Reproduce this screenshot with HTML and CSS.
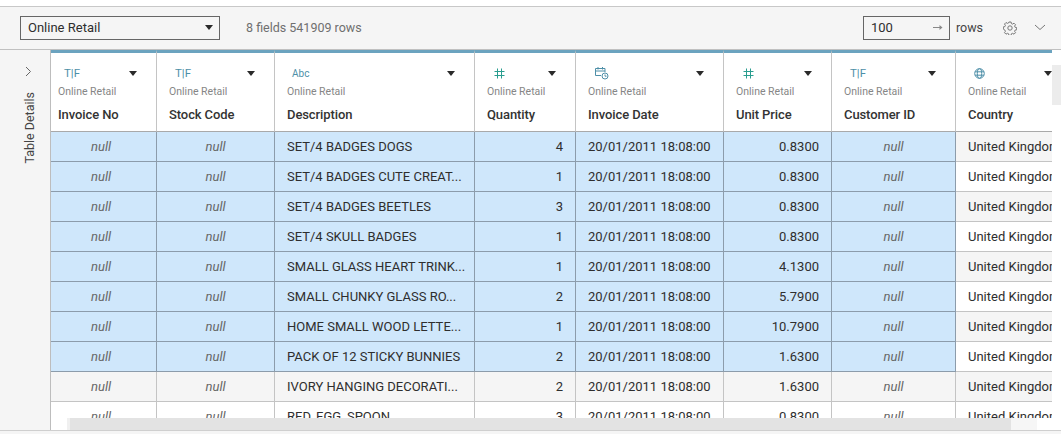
FILE: index.html
```html
<!DOCTYPE html>
<html lang="en">
<head>
<meta charset="utf-8">
<title>Online Retail</title>
<link rel="stylesheet" href="styles.css">
</head>
<body>
<div class="topgap"></div>
<header class="toolbar">
  <div class="source">Online Retail<span class="caret"></span></div>
  <div class="summary">8 fields 541909 rows</div>
  <div class="rowbox"><span>100</span><svg class="arrow" width="10" height="7" viewBox="0 0 10 7"><path d="M0 3.500H9" fill="none" stroke="#888" stroke-width="1"/><path d="M6.500 1L9.500 3.500L6.500 6Z" fill="#888"/></svg></div>
  <div class="rowslabel">rows</div>
  <svg class="gear" width="14" height="14" viewBox="0 0 14 14"><path d="M5.900 1h2.200l.3 1.600 1.200.5 1.400-.9 1.500 1.500-.9 1.400.5 1.200 1.600.3v2.200l-1.600.3-.5 1.200.9 1.400-1.500 1.500-1.400-.9-1.200.5-.3 1.600H5.900l-.3-1.600-1.200-.5-1.400.9-1.500-1.500.9-1.400-.5-1.200L.3 8.100V5.900l1.600-.3.5-1.200-.9-1.400L3 1.500l1.400.9 1.200-.5z" fill="none" stroke="#777"/><circle cx="7" cy="7" r="2.200" fill="none" stroke="#777"/></svg>
  <svg class="chev" width="12" height="7" viewBox="0 0 12 7"><path d="M1 1l5 4.500 5-4.500" fill="none" stroke="#777"/></svg>
</header>
<main class="main">
  <aside class="side">
    <svg class="sidechev" width="7" height="11" viewBox="0 0 7 11"><path d="M1 1l4.500 4.500L1 10" fill="none" stroke="#666"/></svg>
    <div class="sidetitle">Table Details</div>
  </aside>
  <div class="gridwrap">
    <table class="grid">
      <colgroup><col class="c1"><col class="c2"><col class="c3"><col class="c4"><col class="c5"><col class="c6"><col class="c7"><col class="c8"></colgroup>
      <thead>
        <tr>
          <th class="first"><div class="top"><span class="ty ty-text">T|F</span><span class="caret"></span></div><div class="src">Online Retail</div><div class="name">Invoice No</div></th>
          <th><div class="top"><span class="ty ty-text">T|F</span><span class="caret"></span></div><div class="src">Online Retail</div><div class="name">Stock Code</div></th>
          <th><div class="top"><span class="ty ty-abc">Abc</span><span class="caret"></span></div><div class="src">Online Retail</div><div class="name">Description</div></th>
          <th><div class="top"><svg class="ty ty-num" width="11" height="11" viewBox="0 0 11 11"><path d="M3.500 .5V10.500M7.500 .5V10.500M.5 3.500H10.500M.5 7.500H10.500" fill="none" stroke="#2a9d8f"/></svg><span class="caret"></span></div><div class="src">Online Retail</div><div class="name">Quantity</div></th>
          <th><div class="top"><svg class="ty ty-date" width="15" height="14" viewBox="0 0 15 14"><path d="M7 9.500H1.500V2.500H11V6M1.500 5H11M4 1V3.500M8.500 1V3.500" fill="none" stroke="#4e8fa8"/><circle cx="11" cy="10" r="3" fill="none" stroke="#4e8fa8"/><path d="M11 8.500V10.200H12.500" fill="none" stroke="#4e8fa8"/></svg><span class="caret"></span></div><div class="src">Online Retail</div><div class="name">Invoice Date</div></th>
          <th><div class="top"><svg class="ty ty-num" width="11" height="11" viewBox="0 0 11 11"><path d="M3.500 .5V10.500M7.500 .5V10.500M.5 3.500H10.500M.5 7.500H10.500" fill="none" stroke="#2a9d8f"/></svg><span class="caret"></span></div><div class="src">Online Retail</div><div class="name">Unit Price</div></th>
          <th><div class="top"><span class="ty ty-text">T|F</span><span class="caret"></span></div><div class="src">Online Retail</div><div class="name">Customer ID</div></th>
          <th><div class="top"><svg class="ty ty-geo" width="11" height="11" viewBox="0 0 11 11"><circle cx="5.500" cy="5.500" r="4.800" fill="none" stroke="#4e8fa8"/><ellipse cx="5.500" cy="5.500" rx="2.200" ry="4.800" fill="none" stroke="#4e8fa8"/><path d="M1 3.800H10M1 7.200H10" fill="none" stroke="#4e8fa8"/></svg><span class="caret caret-last"></span></div><div class="src">Online Retail</div><div class="name">Country</div></th>
        </tr>
      </thead>
      <tbody>
        <tr class="sel"><td class="null first">null</td><td class="null">null</td><td>SET/4 BADGES DOGS</td><td class="num">4</td><td>20/01/2011 18:08:00</td><td class="num">0.8300</td><td class="null">null</td><td class="country">United Kingdom</td></tr>
        <tr class="sel"><td class="null first">null</td><td class="null">null</td><td>SET/4 BADGES CUTE CREAT...</td><td class="num">1</td><td>20/01/2011 18:08:00</td><td class="num">0.8300</td><td class="null">null</td><td class="country">United Kingdom</td></tr>
        <tr class="sel"><td class="null first">null</td><td class="null">null</td><td>SET/4 BADGES BEETLES</td><td class="num">3</td><td>20/01/2011 18:08:00</td><td class="num">0.8300</td><td class="null">null</td><td class="country">United Kingdom</td></tr>
        <tr class="sel"><td class="null first">null</td><td class="null">null</td><td>SET/4 SKULL BADGES</td><td class="num">1</td><td>20/01/2011 18:08:00</td><td class="num">0.8300</td><td class="null">null</td><td class="country">United Kingdom</td></tr>
        <tr class="sel"><td class="null first">null</td><td class="null">null</td><td>SMALL GLASS HEART TRINK...</td><td class="num">1</td><td>20/01/2011 18:08:00</td><td class="num">4.1300</td><td class="null">null</td><td class="country">United Kingdom</td></tr>
        <tr class="sel"><td class="null first">null</td><td class="null">null</td><td>SMALL CHUNKY GLASS RO...</td><td class="num">2</td><td>20/01/2011 18:08:00</td><td class="num">5.7900</td><td class="null">null</td><td class="country">United Kingdom</td></tr>
        <tr class="sel"><td class="null first">null</td><td class="null">null</td><td>HOME SMALL WOOD LETTE...</td><td class="num">1</td><td>20/01/2011 18:08:00</td><td class="num">10.7900</td><td class="null">null</td><td class="country">United Kingdom</td></tr>
        <tr class="sel"><td class="null first">null</td><td class="null">null</td><td>PACK OF 12 STICKY BUNNIES</td><td class="num">2</td><td>20/01/2011 18:08:00</td><td class="num">1.6300</td><td class="null">null</td><td class="country">United Kingdom</td></tr>
        <tr><td class="null first">null</td><td class="null">null</td><td>IVORY HANGING DECORATI...</td><td class="num">2</td><td>20/01/2011 18:08:00</td><td class="num">1.6300</td><td class="null">null</td><td class="country">United Kingdom</td></tr>
        <tr><td class="null first">null</td><td class="null">null</td><td>RED, EGG, SPOON</td><td class="num">3</td><td>20/01/2011 18:08:00</td><td class="num">0.8300</td><td class="null">null</td><td class="country">United Kingdom</td></tr>
      </tbody>
    </table>
    <div class="vthumb"></div>
    <div class="hbar"><div class="hlead"></div><div class="hthumb"></div><div class="htail"></div><div class="hend"></div></div>
  </div>
</main>
<div class="foot"></div>
</body>
</html>
```
FILE: styles.css
```css
* { box-sizing: border-box; }
html, body { margin: 0; height: 100%; }
body {
  width: 1061px;
  height: 434px;
  overflow: hidden;
  background: #fff;
  color: #2e2e2e;
  font-family: "Roboto", "Liberation Sans", sans-serif;
  font-size: 13px;
}
.topgap { height: 6px; }
.toolbar {
  height: 44px;
  background: #f5f5f5;
  border-top: 1px solid #c8c8c8;
  border-bottom: 1px solid #c0c0c0;
  display: flex;
  align-items: center;
  padding: 0 0 1px 20px;
}
.source {
  width: 200px;
  height: 24px;
  border: 1px solid #666;
  display: flex;
  align-items: center;
  justify-content: space-between;
  padding: 0 6px 0 7px;
}
.summary { margin-left: 26px; color: #6f6f6f; font-size: 12.500px; }
.rowbox {
  margin-left: auto;
  width: 87px;
  height: 24px;
  border: 1px solid #666;
  display: flex;
  align-items: center;
  justify-content: space-between;
  padding: 0 6px 0 7px;
}
.rowslabel { margin-left: 6px; color: #444; font-size: 12.500px; }
.gear { margin-left: 20px; }
.chev { margin-left: 17px; margin-right: 15px; }
.caret {
  width: 0;
  height: 0;
  border-left: 4px solid transparent;
  border-right: 4px solid transparent;
  border-top: 5px solid #2a2a2a;
  flex: none;
}
.main { height: 381px; display: flex; border-bottom: 1px solid #cfcfcf; }
.side {
  width: 51px;
  background: #f5f5f5;
  border-right: 1px solid #bdbdbd;
  display: flex;
  flex-direction: column;
  align-items: center;
  padding-top: 16px;
  flex: none;
}
.sidechev { margin-left: 6px; }
.sidetitle {
  writing-mode: vertical-rl;
  transform: rotate(180deg);
  margin-top: 15px;
  margin-left: 8px;
  font-size: 12.500px;
  color: #444;
}
.gridwrap { position: relative; flex: 1; overflow: hidden; }
.grid {
  border-collapse: separate;
  border-spacing: 0;
  table-layout: fixed;
  width: 1025px;
}
.c1 { width: 106px; }
.c2 { width: 118px; }
.c3 { width: 200px; }
.c4 { width: 101px; }
.c5 { width: 148px; }
.c6 { width: 108px; }
.c7 { width: 124px; }
.c8 { width: 120px; }
th {
  height: 82px;
  padding: 0 0 0 12px;
  text-align: left;
  font-weight: 400;
  vertical-align: top;
  border-top: 3px solid #6ba3bf;
  border-right: 1px solid #c4c4c4;
  border-bottom: 1px solid #a9a9a9;
  background: #fff;
}
th.first { padding-left: 7px; }
.top {
  display: flex;
  align-items: center;
  justify-content: space-between;
  height: 14px;
  margin-top: 13px;
  padding: 0 19px 0 5px;
}
.caret-last { margin-right: 5px; }
.ty { flex: none; }
.ty-text { margin-left: 1px; font-size: 11.500px; color: #4e8fa8; }
.ty-abc { font-size: 10px; color: #4e8fa8; }
.ty-num { margin-left: 2px; }
.ty-date { margin-left: 1px; }
.ty-geo { margin-left: 1px; }
.src { margin-top: 5px; font-size: 10.500px; line-height: 13px; color: #868686; }
.name { margin-top: 9px; font-size: 13px; line-height: 15px; font-weight: 500; color: #333; letter-spacing: -.1px; }
td {
  height: 30px;
  padding: 0 12px;
  white-space: nowrap;
  overflow: hidden;
  border-right: 1px solid #c4c4c4;
  border-bottom: 1px solid #c4c4c4;
  background: #fff;
}
td.first { padding-left: 7px; }
tbody tr:nth-child(odd) td { background: #f5f5f5; }
.sel td { background: #cfe7fb; border-color: #8c9cab; }
tbody tr.sel:nth-child(odd) td { background: #cfe7fb; }
.sel td.country { background: #fff; border-color: #c4c4c4; }
tbody tr.sel:nth-child(odd) td.country { background: #f5f5f5; }
.null { text-align: center; font-style: italic; color: #666; }
.num { text-align: right; }
td.country, th:last-child { border-right: none; }
.vthumb {
  position: absolute;
  right: 0;
  top: 0;
  width: 9px;
  height: 100%;
  background: #fff;
}
.vthumb::after {
  content: "";
  display: block;
  margin-top: 15px;
  height: 40px;
  background: #ececec;
}
.hbar {
  position: absolute;
  left: 0;
  right: 0;
  bottom: 0;
  height: 12px;
  display: flex;
}
.hlead { width: 16px; }
.hthumb { width: 944px; background: #e3e3e3; border-left: 3px solid #f0f0f0; }
.htail { width: 26px; background: #f6f6f6; }
.hend { flex: 1; background: #fff; }
.foot { height: 3px; background: #f5f5f5; }
```
